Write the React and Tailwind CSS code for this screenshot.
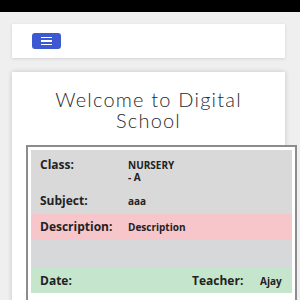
export default function App() {
  const sans = { fontFamily: '"Open Sans", "Liberation Sans", sans-serif' };
  return (
    <div className="w-[300px] h-[300px] overflow-hidden bg-[#efefef]">
      <div className="h-[12px] bg-black" />
      <div className="px-[12px] pr-[15px] pt-[12px]">
        <div className="h-[34px] bg-white shadow-[0_1px_3px_rgba(0,0,0,0.12)] flex items-center pl-[20px]">
          <button className="w-[29px] h-[16px] rounded-[3px] bg-[#3d59d2] flex flex-col items-center justify-center gap-[2px]">
            <span className="block w-[11px] h-[1.5px] bg-white" />
            <span className="block w-[11px] h-[1.5px] bg-white" />
            <span className="block w-[11px] h-[1.5px] bg-white" />
          </button>
        </div>
        <div className="mt-[14px] bg-white shadow-[0_0_5px_rgba(0,0,0,0.18)] pl-[14px] pt-[17px] h-[300px]">
          <h1
            className="text-center text-[20px] leading-[21px] font-light tracking-[0.06em] text-[#2a2a2a] pr-[14px]"
            style={{ fontFamily: 'Lato, "Open Sans", sans-serif' }}
          >
            Welcome to Digital
            <br />
            School
          </h1>
          <div className="mt-[14px] w-[271px] border-2 border-[#8c8c8c] p-[3px] bg-white" style={sans}>
            <div className="bg-[#d9d9d9] text-[#222]">
              <div className="h-[37px] flex items-start pt-[7px]">
                <div className="w-[97px] pl-[9px] text-[12px] leading-[16px] font-bold">Class:</div>
                <div className="w-[50px] text-[10px] leading-[12px] font-bold pt-[2px]">NURSERY - A</div>
              </div>
              <div className="h-[27px] flex items-center">
                <div className="w-[97px] pl-[9px] text-[12px] leading-[16px] font-bold">Subject:</div>
                <div className="text-[10px] leading-[12px] font-bold">aaa</div>
              </div>
            </div>
            <div className="h-[26px] bg-[#f6c6cb] flex items-center text-[#222]">
              <div className="w-[97px] pl-[9px] text-[12px] leading-[16px] font-bold">Description:</div>
              <div className="text-[10px] leading-[12px] font-bold">Description</div>
            </div>
            <div className="h-[28px] bg-[#d7d8da]" />
            <div className="h-[25px] bg-[#c5e6cc] flex items-center text-[#222]">
              <div className="w-[161px] pl-[9px] text-[12px] leading-[16px] font-bold">Date:</div>
              <div className="w-[68px] text-[12px] leading-[16px] font-bold">Teacher:</div>
              <div className="text-[10px] leading-[12px] font-bold">Ajay</div>
            </div>
            <div className="h-[20px]" />
          </div>
        </div>
      </div>
    </div>
  );
}
